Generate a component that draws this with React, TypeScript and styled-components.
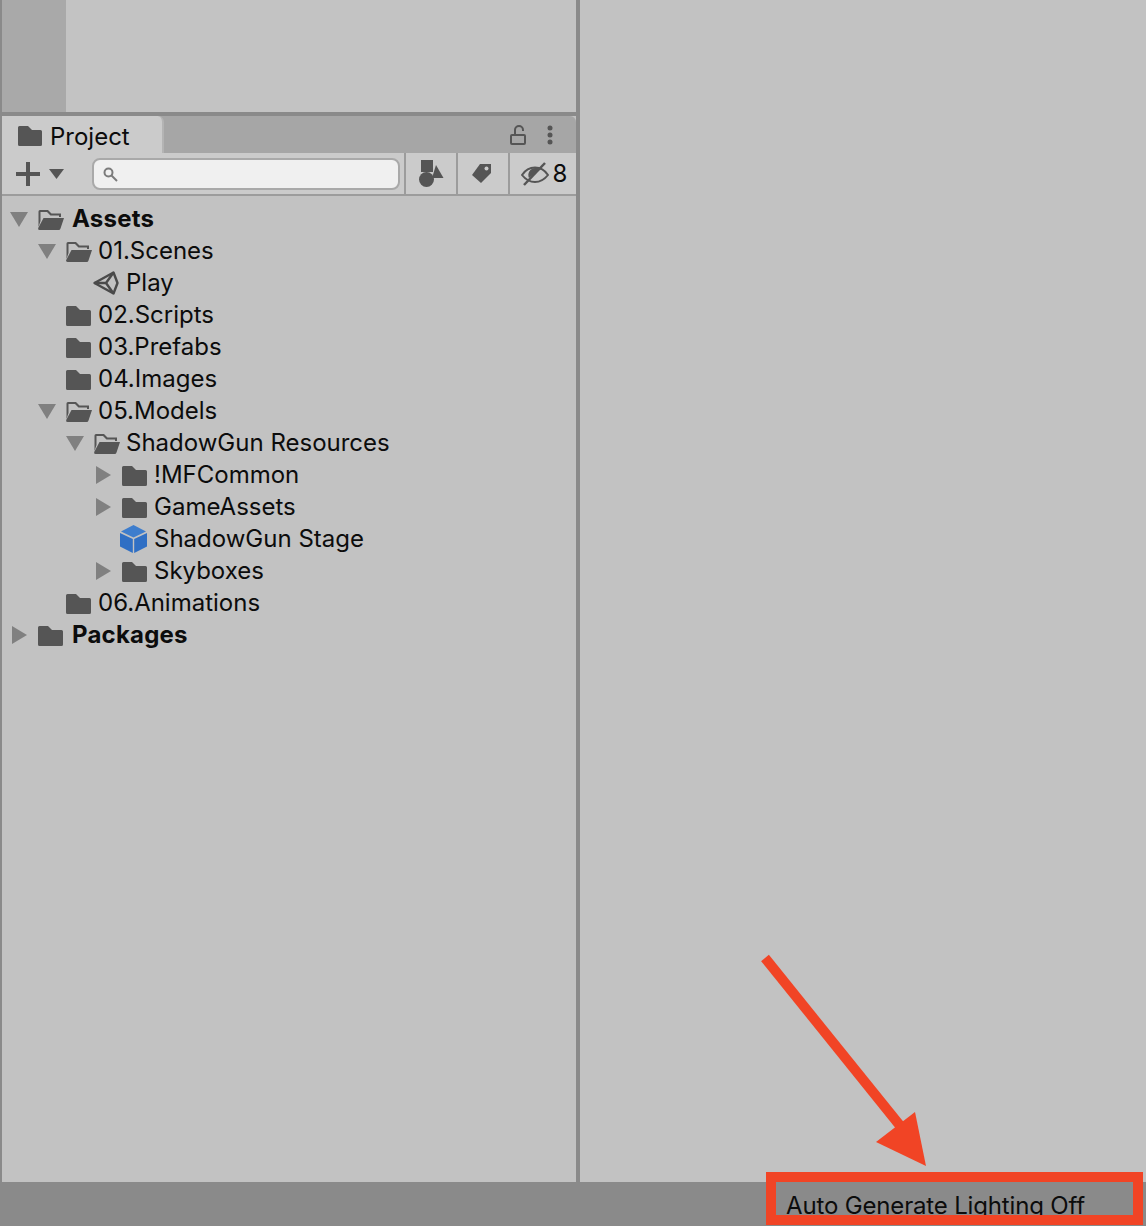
import React from 'react';
import styled, { createGlobalStyle } from 'styled-components';

type TreeItem = {
  label: string;
  depth: number;
  icon: 'open' | 'closed' | 'unity' | 'cube';
  arrow?: 'down' | 'right';
  bold?: boolean;
};

const items: TreeItem[] = [
  { label: 'Assets', depth: 0, icon: 'open', arrow: 'down', bold: true },
  { label: '01.Scenes', depth: 1, icon: 'open', arrow: 'down' },
  { label: 'Play', depth: 2, icon: 'unity' },
  { label: '02.Scripts', depth: 1, icon: 'closed' },
  { label: '03.Prefabs', depth: 1, icon: 'closed' },
  { label: '04.Images', depth: 1, icon: 'closed' },
  { label: '05.Models', depth: 1, icon: 'open', arrow: 'down' },
  { label: 'ShadowGun Resources', depth: 2, icon: 'open', arrow: 'down' },
  { label: '!MFCommon', depth: 3, icon: 'closed', arrow: 'right' },
  { label: 'GameAssets', depth: 3, icon: 'closed', arrow: 'right' },
  { label: 'ShadowGun Stage', depth: 3, icon: 'cube' },
  { label: 'Skyboxes', depth: 3, icon: 'closed', arrow: 'right' },
  { label: '06.Animations', depth: 1, icon: 'closed' },
  { label: 'Packages', depth: 0, icon: 'closed', arrow: 'right', bold: true },
];

const GlobalStyle = createGlobalStyle`
  html, body {
    margin: 0;
    padding: 0;
    background: #c2c2c2;
  }
  * {
    box-sizing: border-box;
  }
`;

const Page = styled.div`
  position: relative;
  width: 1146px;
  height: 1226px;
  overflow: hidden;
  display: flex;
  flex-direction: column;
  font-family: Inter, 'Noto Sans', sans-serif;
  color: #0c0c0c;
  background: #c2c2c2;
`;

const Workspace = styled.div`
  flex: 1;
  min-height: 0;
  display: flex;
`;

const LeftColumn = styled.div`
  width: 580px;
  display: flex;
  flex-direction: column;
  border-left: 2px solid #8a8a8a;
  border-right: 4px solid #8a8a8a;
`;

const RightPanel = styled.div`
  flex: 1;
  background: #c2c2c2;
`;

const Preview = styled.div`
  height: 116px;
  display: flex;
  border-bottom: 4px solid #8a8a8a;
  background: #c3c3c3;
`;

const PreviewGutter = styled.div`
  width: 64px;
  background: #a9a9a9;
`;

const TabBar = styled.div`
  height: 37px;
  display: flex;
  align-items: center;
  justify-content: space-between;
  padding-right: 23px;
  background: #a6a6a6;
  border-radius: 0 6px 0 0;
`;

const Tab = styled.div`
  width: 162px;
  height: 37px;
  display: flex;
  align-items: center;
  gap: 8px;
  padding-left: 16px;
  padding-top: 3px;
  font-size: 24px;
  background: #cbcbcb;
  border-right: 2px solid #b4b4b4;
  border-radius: 0 6px 0 0;
`;

const TabActions = styled.div`
  display: flex;
  align-items: center;
  gap: 21px;
  padding-top: 1px;
`;

const Toolbar = styled.div`
  height: 43px;
  display: flex;
  align-items: stretch;
  background: #cbcbcb;
  border-bottom: 2px solid #9c9c9c;
`;

const CreateButton = styled.div`
  width: 90px;
  display: flex;
  align-items: center;
  gap: 9px;
  padding-left: 14px;
`;

const SearchField = styled.div`
  width: 308px;
  height: 32px;
  margin-top: 5px;
  display: flex;
  align-items: center;
  padding-left: 9px;
  background: #f0f0f0;
  border: 2px solid #a9a9a9;
  border-radius: 8px;
`;

const ToolButton = styled.div<{ $width: number }>`
  width: ${(p) => p.$width}px;
  display: flex;
  align-items: center;
  justify-content: center;
  gap: 4px;
  font-size: 24px;
  border-left: 2px solid #9c9c9c;
`;

const FirstToolButton = styled(ToolButton)`
  margin-left: 4px;
`;

const TagButton = styled(ToolButton)`
  padding-right: 3px;
`;

const EyeButton = styled(ToolButton)`
  padding-left: 3px;
`;

const Tree = styled.div`
  flex: 1;
  padding-top: 7px;
  background: #c2c2c2;
`;

const Row = styled.div<{ $depth: number }>`
  height: 32px;
  display: flex;
  align-items: center;
  padding-left: ${(p) => 8 + p.$depth * 28}px;
  font-size: 24px;
  white-space: nowrap;
`;

const Label = styled.span<{ $bold?: boolean }>`
  margin-bottom: 1px;
  margin-left: ${(p) => (p.$bold ? 2 : 0)}px;
  font-weight: ${(p) => (p.$bold ? 700 : 400)};
  letter-spacing: ${(p) => (p.$bold ? 0.2 : 0)}px;
`;

const ArrowSlot = styled.span`
  width: 27px;
  height: 32px;
  flex: none;
  display: flex;
  align-items: center;
`;

const IconSlot = styled.span`
  width: 33px;
  height: 32px;
  flex: none;
  display: flex;
  align-items: center;
`;

const StatusBar = styled.div`
  height: 44px;
  display: flex;
  justify-content: flex-end;
  background: #8a8a8a;
`;

const StatusText = styled.div`
  width: 360px;
  height: 44px;
  overflow: hidden;
  padding-top: 9px;
  font-size: 24px;
  line-height: 29px;
  letter-spacing: -0.16px;
  white-space: nowrap;
`;

const Callout = styled.div`
  position: absolute;
  left: 766px;
  top: 1172px;
  width: 377px;
  height: 53px;
  border: 10px solid #f14425;
`;

const CalloutArrow = styled.svg`
  position: absolute;
  left: 750px;
  top: 950px;
`;

const FolderClosed = () => (
  <svg width="28" height="24" viewBox="0 0 28 24" fill="#555">
    <path d="M1 4.500A1.500 1.500 0 0 1 2.500 3H11l4 4h9.500A1.500 1.500 0 0 1 26 8.500V21.500A1.500 1.500 0 0 1 24.500 23H2.500A1.500 1.500 0 0 1 1 21.500Z" />
  </svg>
);

const FolderOpen = () => (
  <svg width="28" height="24" viewBox="0 0 28 24" fill="#555">
    <path d="M1.500 4.500A1.500 1.500 0 0 1 3 3h8l3.500 3.500H24V10h-2V8.500H13.500L10 5H3.500v9L1.500 20Z" />
    <path d="M6.500 11H27L23.500 21.500A2 2 0 0 1 21.500 23H2.500A1.500 1.500 0 0 1 1.200 21Z" />
  </svg>
);

const UnityIcon = () => (
  <svg width="26" height="24" viewBox="0 0 26 24" fill="none" stroke="#4a4a4a" strokeWidth="2.400">
    <path d="M1.500 12 20.500 1.500 24.500 12 20.500 22.500Z" strokeLinejoin="round" />
    <path d="M1.500 12H13L20.500 1.500M13 12 20.500 22.500" />
  </svg>
);

const CubeIcon = () => (
  <svg width="27" height="28" viewBox="0 0 27 28" style={{ marginLeft: -1 }}>
    <path d="M13.500 0 26 6.500 13.500 12.500 1 6.500Z" fill="#3d7dcd" />
    <path d="M0 8 12.800 14V28L0 21.500Z" fill="#2f6fc4" />
    <path d="M27 8 14.200 14V28L27 21.500Z" fill="#2f6fc4" />
  </svg>
);

const TreeArrow = ({ dir }: { dir: 'down' | 'right' }) => (
  <svg width="18" height="18" viewBox="0 0 18 18" fill="#808080">
    {dir === 'down' ? <path d="M0 2H18L9 17Z" /> : <path d="M2 0 17 9 2 18Z" />}
  </svg>
);

const treeIcons = {
  open: <FolderOpen />,
  closed: <FolderClosed />,
  unity: <UnityIcon />,
  cube: <CubeIcon />,
};

const App: React.FC = () => {
  return (
    <Page>
      <GlobalStyle />
      <Workspace>
        <LeftColumn>
          <Preview>
            <PreviewGutter />
          </Preview>
          <TabBar>
            <Tab>
              <svg width="24" height="20" viewBox="0 0 24 20" fill="#555">
                <path d="M0 1.500A1.500 1.500 0 0 1 1.500 0H10l4 4h8.500A1.500 1.500 0 0 1 24 5.500V18.500A1.500 1.500 0 0 1 22.500 20H1.500A1.500 1.500 0 0 1 0 18.500Z" />
              </svg>
              Project
            </Tab>
            <TabActions>
              <svg width="16" height="20" viewBox="0 0 16 20" fill="none" stroke="#555" strokeWidth="2">
                <rect x="1" y="10" width="14" height="9" rx="1" />
                <path d="M3 10V5a4 4 0 0 1 8 0V6" transform="translate(2 0)" />
              </svg>
              <svg width="6" height="20" viewBox="0 0 6 20" fill="#555">
                <circle cx="3" cy="3" r="2.500" />
                <circle cx="3" cy="10" r="2.500" />
                <circle cx="3" cy="17" r="2.500" />
              </svg>
            </TabActions>
          </TabBar>
          <Toolbar>
            <CreateButton>
              <svg width="24" height="24" viewBox="0 0 24 24" fill="#555">
                <path d="M10 0h4v10h10v4H14v10h-4V14H0v-4h10Z" />
              </svg>
              <svg width="15" height="10" viewBox="0 0 15 10" fill="#555">
                <path d="M0 0H15L7.500 10Z" />
              </svg>
            </CreateButton>
            <SearchField>
              <svg width="15" height="15" viewBox="0 0 15 15" fill="none" stroke="#7b7b7b" strokeWidth="2">
                <circle cx="5.500" cy="5.500" r="4" />
                <path d="M8.500 8.500 14 14" />
              </svg>
            </SearchField>
            <FirstToolButton $width={52}>
              <svg width="26" height="28" viewBox="0 0 26 28" fill="#555">
                <rect x="3" y="0" width="12" height="12" />
                <path d="M18 5 25.500 18H14Z" />
                <circle cx="8.500" cy="19.500" r="7.500" />
              </svg>
            </FirstToolButton>
            <TagButton $width={52}>
              <svg width="22" height="22" viewBox="0 0 22 22">
                <path d="M9 1H20V10L10 20 1 12Z" fill="#555" />
                <circle cx="15.500" cy="5.500" r="2" fill="#cbcbcb" />
              </svg>
            </TagButton>
            <EyeButton $width={67}>
              <svg width="28" height="24" viewBox="0 0 28 24" fill="none" stroke="#555" strokeWidth="2">
                <path d="M1 13C5 7 9 5.500 14 5.500S23 7 27 13C23 18 19 20 14 20S5 18 1 13Z" />
                <path d="M14 6a7 7 0 0 0-6 10L21 6Z" fill="#555" stroke="none" />
                <path d="M3 23 24 1" strokeWidth="2.500" />
              </svg>
              8
            </EyeButton>
          </Toolbar>
          <Tree>
            {items.map((item) => (
              <Row key={item.label} $depth={item.depth}>
                <ArrowSlot>{item.arrow && <TreeArrow dir={item.arrow} />}</ArrowSlot>
                <IconSlot>{treeIcons[item.icon]}</IconSlot>
                <Label $bold={item.bold}>{item.label}</Label>
              </Row>
            ))}
          </Tree>
        </LeftColumn>
        <RightPanel />
      </Workspace>
      <StatusBar>
        <StatusText>Auto Generate Lighting Off</StatusText>
      </StatusBar>
      <CalloutArrow width="190" height="225" viewBox="0 0 190 225" fill="#f14425">
        <path d="M15 8 160 188" stroke="#f14425" strokeWidth="10" />
        <path d="M165 162 176 216 126 192Z" />
      </CalloutArrow>
      <Callout />
    </Page>
  );
};

export default App;
